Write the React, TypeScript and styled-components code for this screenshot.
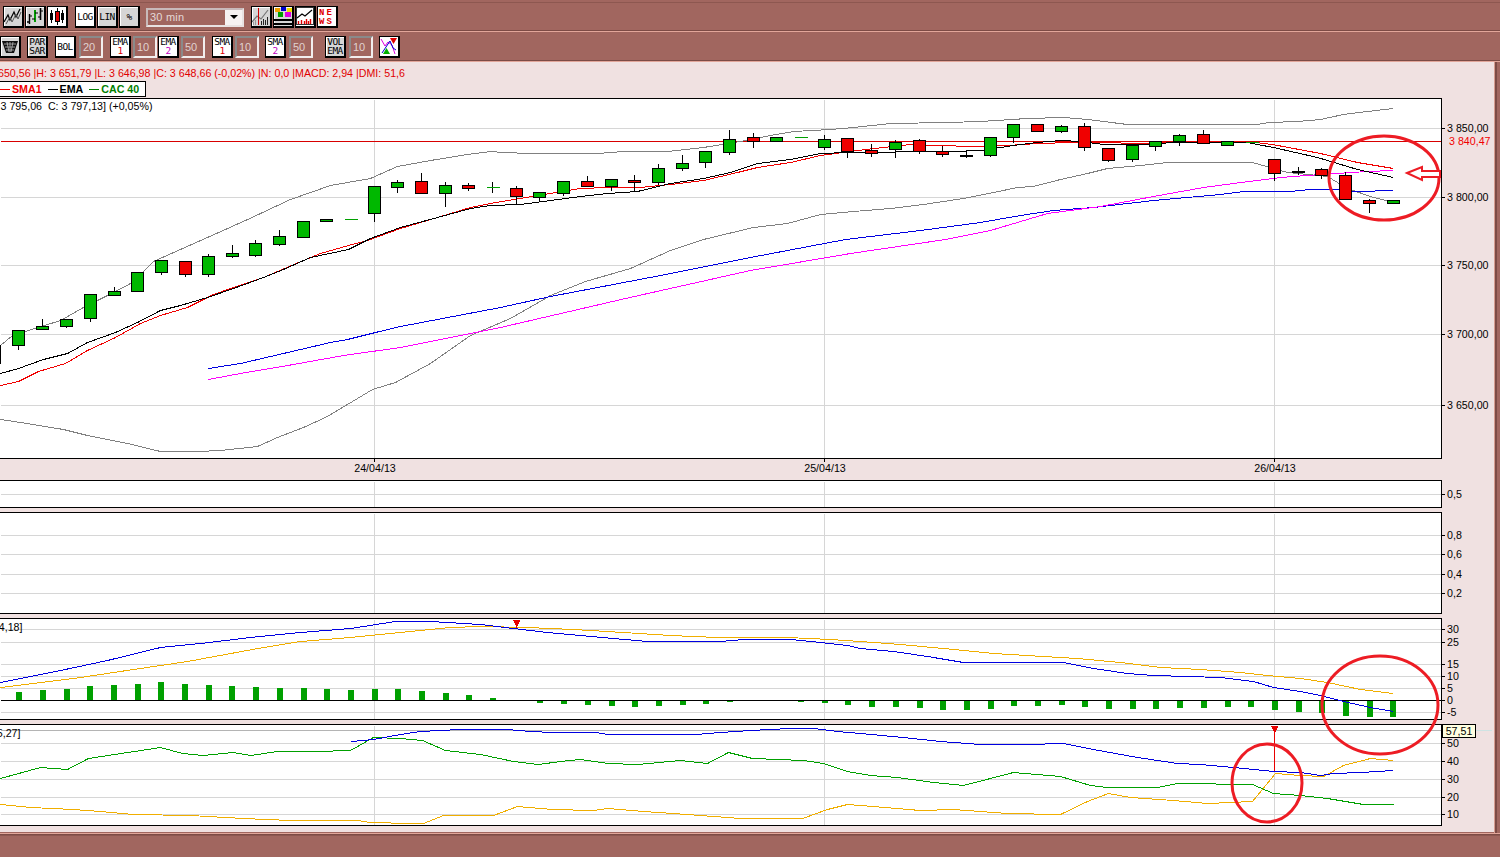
import type { ReactNode } from "react";
import styled, { createGlobalStyle } from "styled-components";

const GlobalStyle = createGlobalStyle`
	html, body {
		margin: 0;
		padding: 0;
		background: #a1665f;
		overflow: hidden;
	}
`;

// === layout ===
const Shell = styled.div`
	position: relative;
	width: 1500px;
	height: 857px;
	display: flex;
	flex-direction: column;
	background: #a1665f;
	font-family: "Liberation Sans", Arial, sans-serif;
	overflow: hidden;
`;

const TopToolbar = styled.div`
	box-sizing: border-box;
	height: 31px;
	padding: 4px 0 0 3px;
	display: flex;
	align-items: center;
	border-bottom: 1px solid #7d4b45;
	background: linear-gradient(#a1665f 2px, #8d5750 2px, #8d5750 3px, #a1665f 3px);
`;

const IndicatorToolbar = styled.div`
	box-sizing: border-box;
	height: 30px;
	padding-top: 1px;
	display: flex;
	align-items: center;
	border-top: 1px solid #e2a69a;
	border-bottom: 1px solid #7d4b45;
`;

const Middle = styled.div`
	display: flex;
	height: 771px;
	border-top: 1px solid #e2a69a;
`;

const Workspace = styled.div`
	box-sizing: border-box;
	width: 1494px;
	height: 770px;
	padding-top: 4px;
	background: #f0e1e1;
	overflow: hidden;
`;

const RightEdge = styled.div`
	width: 6px;
	border-left: 1px solid #d59c90;
	box-shadow: inset 2px 0 0 #7d4b45;
	box-sizing: border-box;
`;

const BottomBar = styled.div`
	flex: 1;
	border-top: 1px solid #e2a69a;
	box-shadow: inset 0 1px 0 #7d4b45, inset 0 2px 0 #8d5750;
`;

const InfoLine = styled.div`
	height: 15px;
	line-height: 15px;
	margin-left: -2px;
	font-size: 10.67px;
	color: #e00000;
	white-space: pre;
`;

const Legend = styled.div`
	box-sizing: border-box;
	display: flex;
	align-items: center;
	width: 146px;
	height: 16px;
	background: #fff;
	border: 1px solid #000;
	border-left: none;
	font-size: 10.67px;
	font-weight: bold;
	white-space: nowrap;
`;

const LegendItem = styled.span<{ $color: string; $first?: boolean }>`
	display: flex;
	flex: none;
	align-items: center;
	gap: 2px;
	margin-left: ${(p) => (p.$first ? 0 : 6)}px;
	color: ${(p) => p.$color};
	&::before {
		content: "";
		width: 10px;
		height: 1px;
		background: ${(p) => p.$color};
	}
`;

const PanelRow = styled.div<{ $mt: number }>`
	display: flex;
	margin-top: ${(p) => p.$mt}px;
`;

const PlotBox = styled.div<{ $h: number }>`
	box-sizing: border-box;
	width: 1442px;
	height: ${(p) => p.$h}px;
	background: #fff;
	border: 1px solid #000;
	border-left: none;
`;

const DrawSvg = styled.svg`
	display: block;
	font-family: "Liberation Sans", Arial, sans-serif;
	font-size: 10.67px;
	overflow: hidden;
`;

const Overlay = styled.svg`
	position: absolute;
	left: 0;
	top: 0;
	pointer-events: none;
`;

const ValueTip = styled.div`
	position: absolute;
	left: 1442px;
	top: 724px;
	box-sizing: border-box;
	width: 34px;
	height: 14px;
	line-height: 12px;
	text-align: center;
	background: #ffffe1;
	border: 1px solid #000;
	font-size: 10.67px;
`;

const TipLine = styled.div`
	position: absolute;
	left: 1476px;
	top: 730px;
	width: 16px;
	height: 1px;
	background: #cfe3e3;
`;

// === toolbar parts ===
const ToolButton = styled.button<{ $active?: boolean; $ml?: number }>`
	box-sizing: border-box;
	flex: none;
	width: 21px;
	height: 22px;
	margin: 0 0 0 ${(p) => p.$ml ?? 0}px;
	padding: 0;
	display: flex;
	flex-direction: column;
	align-items: center;
	justify-content: center;
	background: ${(p) => (p.$active ? "#fff" : "#d6d6d6")};
	border: 1px solid #000;
	border-right-width: 2px;
	border-bottom-width: 2px;
	box-shadow: inset 1px 1px 0 #fff;
	color: #000;
	font-family: "DejaVu Sans Mono", "Liberation Mono", monospace;
	font-size: 9.5px;
	line-height: 9px;
	letter-spacing: -0.5px;
`;

const SubDigit = styled.span<{ $color: string }>`
	color: ${(p) => p.$color};
`;

const NumberBox = styled.div<{ $ml?: number }>`
	box-sizing: border-box;
	flex: none;
	width: 24px;
	height: 22px;
	margin-left: ${(p) => p.$ml ?? 3}px;
	padding-left: 2px;
	line-height: 18px;
	background: #a1665f;
	border: 2px solid #8a8a8a;
	border-right-color: #f2eeee;
	border-bottom-color: #f2eeee;
	color: #e0d2d0;
	font-size: 11px;
`;

const IntervalSelect = styled.div`
	box-sizing: border-box;
	flex: none;
	display: flex;
	width: 98px;
	height: 19px;
	margin-left: 6px;
	border: 2px solid #e8e2e2;
	border-top-color: #c8baba;
	border-left-color: #c8baba;
	color: #e4d8d8;
	font-size: 11px;
	line-height: 15px;
`;

const IntervalText = styled.div`
	flex: 1;
	padding-left: 2px;
	letter-spacing: 0.2px;
`;

const IntervalArrow = styled.div`
	width: 17px;
	display: flex;
	align-items: center;
	justify-content: center;
	background: #f6f2f2;
	&::after {
		content: "";
		border-left: 4px solid transparent;
		border-right: 4px solid transparent;
		border-top: 4px solid #000;
	}
`;

const IconSvg = styled.svg`
	display: block;
`;

const Icon = ({ children }: { children: ReactNode }) => (
	<IconSvg width="18" height="19" viewBox="0 0 18 19">
		{children}
	</IconSvg>
);

// === chart helpers ===
type Pt = [number, number];

const pts = (a: Pt[]) => a.map((p) => p.join(",")).join(" ");

const Trace = ({ data, color }: { data: Pt[]; color: string }) => (
	<polyline points={pts(data)} fill="none" stroke={color} strokeWidth={1} shapeRendering="crispEdges" />
);

const VERTICALS = [374, 824, 1274];

const Grid = ({ ys, top, bottom, color = "#d6d6d6" }: { ys: number[]; top: number; bottom: number; color?: string }) => (
	<g stroke={color} strokeWidth={1} shapeRendering="crispEdges">
		{ys.map((y) => (
			<line key={y} x1={0} x2={1441} y1={y} y2={y} />
		))}
		{VERTICALS.map((x) => (
			<line key={x} x1={x} x2={x} y1={top} y2={bottom} />
		))}
	</g>
);

const Plot = ({ top, bottom, mt, ticks, children }: { top: number; bottom: number; mt: number; ticks: [number, string, string?][]; children: ReactNode }) => {
	const h = bottom - top + 1;
	return (
		<PanelRow $mt={mt}>
			<PlotBox $h={h}>
				<DrawSvg width={1441} height={h - 2} viewBox={`0 ${top + 1} 1441 ${h - 2}`}>
					<g transform="translate(0.5,0.5)">{children}</g>
				</DrawSvg>
			</PlotBox>
			<DrawSvg width={52} height={h} viewBox={`1442 ${top} 52 ${h}`}>
				{ticks.map(([y, label, color]) => (
					<g key={label}>
						{!color && <line x1={1442} x2={1445} y1={y + 0.5} y2={y + 0.5} stroke="#000" shapeRendering="crispEdges" />}
						<text x={color ? 1449 : 1447} y={y + 4} fill={color ?? "#000"}>
							{label}
						</text>
					</g>
				))}
			</DrawSvg>
		</PanelRow>
	);
};

// x, body top, body bottom, high, low, colour
type Candle = [number, number, number, number, number, "g" | "r" | "k"];

const CANDLES: Candle[] = [
	[-6, 345, 363, 345, 363, "g"],
	[18, 330, 345, 330, 349, "g"],
	[42, 326, 329, 318, 329, "g"],
	[66, 319, 326, 319, 327, "g"],
	[90, 294, 318, 293, 321, "g"],
	[114, 291, 295, 286, 295, "g"],
	[137, 272, 291, 271, 291, "g"],
	[161, 260, 272, 259, 274, "g"],
	[185, 261, 274, 261, 276, "r"],
	[208, 256, 274, 253, 276, "g"],
	[232, 253, 256, 244, 257, "g"],
	[255, 243, 255, 239, 256, "g"],
	[279, 236, 244, 229, 245, "g"],
	[303, 221, 237, 220, 237, "g"],
	[326, 219, 221, 219, 221, "g"],
	[350, 219, 219, 219, 219, "g"],
	[374, 186, 213, 185, 221, "g"],
	[397, 182, 187, 179, 192, "g"],
	[421, 181, 193, 172, 193, "r"],
	[445, 185, 193, 181, 206, "g"],
	[468, 185, 188, 182, 190, "r"],
	[492, 187, 187, 181, 192, "g"],
	[516, 188, 196, 185, 203, "r"],
	[539, 192, 197, 191, 201, "g"],
	[563, 181, 193, 180, 195, "g"],
	[587, 181, 186, 175, 186, "r"],
	[611, 179, 186, 179, 190, "g"],
	[634, 180, 182, 174, 191, "r"],
	[658, 168, 182, 163, 184, "g"],
	[682, 163, 168, 154, 170, "g"],
	[705, 151, 162, 151, 167, "g"],
	[729, 139, 152, 129, 154, "g"],
	[753, 137, 141, 132, 147, "r"],
	[776, 137, 141, 137, 141, "g"],
	[800, 137, 137, 137, 137, "g"],
	[824, 139, 147, 134, 149, "g"],
	[847, 138, 151, 138, 157, "r"],
	[871, 150, 153, 143, 156, "r"],
	[895, 142, 149, 139, 157, "g"],
	[919, 140, 151, 138, 153, "r"],
	[942, 151, 154, 145, 156, "r"],
	[966, 155, 156, 149, 157, "k"],
	[990, 137, 155, 136, 156, "g"],
	[1013, 124, 137, 123, 142, "g"],
	[1037, 124, 131, 124, 131, "r"],
	[1061, 126, 131, 124, 132, "g"],
	[1084, 126, 147, 122, 150, "r"],
	[1108, 148, 160, 148, 161, "r"],
	[1132, 145, 159, 143, 161, "g"],
	[1155, 141, 146, 140, 150, "g"],
	[1179, 135, 141, 133, 145, "g"],
	[1203, 134, 143, 129, 143, "r"],
	[1227, 141, 145, 141, 145, "g"],
	[1251, 142, 142, 142, 142, "g"],
	[1274, 159, 173, 159, 180, "r"],
	[1298, 171, 172, 166, 174, "k"],
	[1321, 169, 175, 167, 178, "r"],
	[1345, 175, 199, 171, 199, "r"],
	[1369, 200, 203, 198, 212, "r"],
	[1393, 200, 203, 200, 203, "g"],
];

const FILL = { g: "#00b800", r: "#f00000", k: "#000" };

const CandleMark = ({ c }: { c: Candle }) => {
	const [x, t, b, hi, lo, col] = c;
	if (t === b) {
		return (
			<g shapeRendering="crispEdges">
				{hi !== lo && <line x1={x} x2={x} y1={hi} y2={lo} stroke="#000" />}
				<line x1={x - 6} x2={x + 7} y1={t} y2={t} stroke="#00a000" />
			</g>
		);
	}
	return (
		<g shapeRendering="crispEdges">
			<line x1={x} x2={x} y1={hi} y2={lo} stroke="#000" />
			<rect x={x - 6} y={t} width={12} height={b - t} fill={FILL[col]} stroke="#000" />
		</g>
	);
};

const BOLL_UP: Pt[] = [[0, 345], [12, 335], [60, 320], [83, 307], [107, 295], [132, 282], [153, 261], [245, 220], [290, 199], [330, 185], [370, 178], [397, 166], [430, 160], [467, 154], [490, 151], [503, 152], [530, 153], [550, 153], [597, 153], [623, 151], [647, 151], [667, 151], [703, 147], [740, 141], [770, 135], [793, 131], [830, 129], [853, 127], [890, 123], [947, 122], [980, 121], [1027, 118], [1063, 117], [1087, 119], [1127, 124], [1173, 124], [1257, 124], [1268, 122], [1297, 121], [1320, 119], [1343, 114], [1367, 111], [1393, 108]];
const BOLL_LOW: Pt[] = [[0, 419], [20, 422], [63, 429], [87, 435], [127, 443], [160, 451], [197, 451], [220, 450], [257, 446], [277, 437], [303, 427], [325, 417], [347, 404], [372, 389], [395, 382], [430, 363], [470, 335], [510, 318], [550, 295], [585, 281], [630, 268], [670, 250], [703, 239], [753, 227], [787, 223], [820, 214], [853, 211], [890, 208], [923, 204], [963, 198], [993, 192], [1017, 187], [1033, 186], [1060, 179], [1087, 173], [1107, 168], [1140, 165], [1167, 162], [1252, 162], [1287, 172], [1327, 176], [1347, 188], [1370, 196], [1393, 202]];
const EMA1: Pt[] = [[0, 373], [18, 368], [43, 359], [67, 353], [87, 342], [115, 332], [137, 322], [160, 310], [180, 305], [207, 297], [233, 288], [263, 277], [283, 269], [310, 257], [348, 249], [370, 238], [400, 227], [437, 217], [470, 208], [490, 205], [520, 204], [550, 200], [580, 196], [607, 193], [637, 191], [670, 183], [703, 178], [730, 172], [757, 163], [790, 159], [820, 153], [847, 152], [870, 152], [920, 151], [953, 151], [980, 150], [1013, 145], [1037, 142], [1060, 140], [1080, 141], [1103, 144], [1143, 144], [1173, 142], [1247, 142], [1257, 144], [1273, 147], [1317, 157], [1357, 169], [1393, 177]];
const SMA1: Pt[] = [[0, 385], [18, 381], [38, 371], [65, 363], [87, 350], [115, 337], [140, 323], [160, 315], [187, 307], [213, 294], [233, 287], [263, 277], [303, 260], [320, 253], [348, 245], [367, 240], [400, 228], [437, 217], [470, 207], [490, 203], [520, 198], [550, 193], [580, 188], [607, 187], [640, 187], [670, 184], [703, 180], [737, 172], [757, 167], [790, 162], [820, 155], [857, 150], [883, 147], [910, 144], [930, 145], [980, 146], [1007, 145], [1037, 143], [1073, 142], [1097, 142], [1143, 143], [1187, 141], [1233, 141], [1255, 142], [1272, 144], [1320, 153], [1357, 162], [1393, 168]];
const EMA2: Pt[] = [[208, 368], [240, 363], [330, 342], [347, 339], [375, 332], [400, 326], [500, 307], [550, 296], [660, 275], [750, 257], [845, 239], [920, 230], [980, 222], [1020, 215], [1053, 210], [1093, 207], [1153, 200], [1220, 194], [1243, 191], [1290, 191], [1310, 189], [1333, 189], [1357, 191], [1393, 190]];
const SMA2: Pt[] = [[208, 379], [240, 373], [293, 364], [343, 355], [400, 347], [500, 327], [625, 298], [750, 270], [850, 253], [945, 239], [990, 230], [1047, 213], [1100, 206], [1153, 196], [1203, 187], [1233, 183], [1280, 177], [1320, 174], [1367, 171], [1393, 170]];

const MACD_LINE: Pt[] = [[0, 682], [60, 670], [107, 660], [160, 647], [200, 643], [250, 637], [300, 632], [350, 628], [395, 621], [430, 621], [480, 624], [513, 628], [547, 632], [580, 635], [613, 638], [647, 641], [720, 641], [743, 639], [790, 639], [820, 642], [847, 645], [860, 648], [893, 651], [927, 656], [963, 662], [1003, 662], [1063, 662], [1093, 668], [1127, 673], [1153, 675], [1187, 676], [1220, 677], [1253, 681], [1273, 687], [1300, 691], [1320, 695], [1343, 701], [1370, 707], [1393, 711]];
const MACD_SIG: Pt[] = [[0, 687], [33, 683], [80, 677], [133, 669], [187, 661], [252, 649], [300, 641], [350, 637], [400, 632], [450, 627], [480, 626], [527, 627], [573, 629], [623, 632], [670, 635], [717, 637], [787, 637], [830, 639], [860, 641], [900, 644], [943, 648], [993, 653], [1043, 656], [1077, 658], [1120, 662], [1160, 667], [1200, 669], [1240, 672], [1267, 675], [1300, 678], [1327, 682], [1360, 689], [1393, 693]];
const HIST: [number, number][] = [[19, 692], [43, 690], [67, 689], [90, 686], [114, 685], [138, 684], [161, 682], [185, 684], [209, 685], [232, 686], [256, 687], [280, 688], [304, 688], [327, 689], [351, 690], [375, 689], [398, 689], [422, 691], [446, 693], [469, 695], [493, 698], [540, 703], [564, 704], [588, 705], [612, 706], [635, 707], [659, 706], [683, 705], [706, 704], [730, 702], [801, 702], [825, 703], [848, 705], [872, 707], [896, 707], [920, 708], [943, 710], [967, 710], [991, 709], [1014, 706], [1038, 706], [1062, 705], [1085, 707], [1109, 709], [1133, 709], [1156, 709], [1180, 708], [1204, 708], [1228, 707], [1251, 707], [1275, 710], [1299, 712], [1322, 713], [1346, 716], [1370, 717], [1393, 717]];

const DMI_BLUE: Pt[] = [[351, 741], [373, 739], [400, 734], [420, 731], [460, 729], [507, 729], [530, 731], [553, 732], [595, 732], [608, 734], [695, 734], [720, 732], [750, 730], [790, 728], [813, 728], [837, 731], [860, 733], [903, 737], [940, 741], [980, 744], [1027, 744], [1063, 743], [1093, 749], [1137, 757], [1177, 763], [1200, 764], [1233, 767], [1273, 771], [1300, 772], [1320, 775], [1333, 773], [1360, 772], [1393, 770]];
const DMI_GREEN: Pt[] = [[0, 778], [40, 767], [67, 769], [88, 758], [160, 747], [182, 753], [203, 755], [233, 752], [250, 755], [277, 751], [315, 751], [350, 750], [373, 737], [400, 738], [422, 740], [445, 750], [480, 754], [513, 761], [538, 764], [560, 761], [580, 759], [608, 763], [637, 764], [680, 760], [707, 763], [728, 752], [752, 758], [803, 760], [823, 763], [847, 771], [870, 775], [897, 777], [933, 782], [963, 785], [1013, 772], [1060, 776], [1090, 785], [1107, 787], [1157, 787], [1177, 783], [1252, 784], [1273, 793], [1300, 795], [1327, 798], [1363, 804], [1393, 804]];
const DMI_ORANGE: Pt[] = [[0, 804], [30, 807], [73, 809], [100, 811], [133, 814], [190, 815], [243, 818], [290, 820], [357, 820], [370, 822], [410, 823], [423, 823], [443, 815], [493, 815], [517, 806], [552, 809], [593, 810], [607, 808], [643, 811], [687, 814], [740, 818], [802, 818], [827, 809], [847, 804], [860, 805], [920, 810], [953, 809], [1007, 813], [1060, 814], [1087, 801], [1108, 793], [1130, 797], [1173, 800], [1207, 803], [1252, 801], [1275, 773], [1300, 775], [1323, 776], [1343, 765], [1370, 758], [1393, 760]];

const ORANGE = "#f0ae00";
const BLUE = "#0000e0";

const DateAxis = () => (
	<DrawSvg width={1442} height={21} viewBox="0 459 1442 21">
		{VERTICALS.map((x, i) => (
			<g key={x}>
				<line x1={x + 0.5} x2={x + 0.5} y1={459} y2={462} stroke="#000" shapeRendering="crispEdges" />
				<text x={x + 1} y={472} textAnchor="middle" fill="#000">
					{["24/04/13", "25/04/13", "26/04/13"][i]}
				</text>
			</g>
		))}
	</DrawSvg>
);

const Marker = ({ x, y }: { x: number; y: number }) => (
	<polygon points={`${x - 4},${y} ${x + 4},${y} ${x + 2},${y + 4} ${x + 1},${y + 6} ${x},${y + 9} ${x - 1},${y + 6} ${x - 2},${y + 4}`} fill="#e80000" shapeRendering="crispEdges" />
);

export default function App() {
	return (
		<Shell>
			<GlobalStyle />
			<TopToolbar>
				<ToolButton title="Line">
					<Icon>
						<polyline points="0,15 4,8 6,13 10,5 12,10 16,2" fill="none" stroke="#000" strokeWidth={1.2} />
						<polyline points="2,17 6,10 8,15 12,7 14,12 17,5" fill="none" stroke="#555" strokeWidth={1} />
					</Icon>
				</ToolButton>
				<ToolButton $ml={1} title="Bars">
					<Icon>
						<path d="M3.5 7V17M1 15H3.5" stroke="#000" strokeWidth={1.4} fill="none" />
						<path d="M3.5 9H6" stroke="#000" fill="none" />
						<path d="M9 3V15" stroke="#009a00" strokeWidth={2} fill="none" />
						<path d="M6 12H9M9 6H12" stroke="#000" fill="none" />
						<path d="M14.5 1V13" stroke="#000" strokeWidth={1.6} fill="none" />
						<path d="M12 10H14.5M14.5 4H17" stroke="#000" fill="none" />
					</Icon>
				</ToolButton>
				<ToolButton $ml={1} $active title="Candles">
					<Icon>
						<path d="M3.5 3V16M9.5 1V18M14.5 3V16" stroke="#000" />
						<rect x="2" y="6" width="3" height="7" fill="#000" />
						<rect x="7.5" y="4.5" width="4" height="10" fill="#e00000" stroke="#000" />
						<rect x="13" y="6" width="3" height="7" fill="#000" />
					</Icon>
				</ToolButton>
				<ToolButton $ml={7} $active>LOG</ToolButton>
				<ToolButton $ml={1}>LIN</ToolButton>
				<ToolButton $ml={1}>%</ToolButton>
				<IntervalSelect>
					<IntervalText>30 min</IntervalText>
					<IntervalArrow />
				</IntervalSelect>
				<ToolButton $ml={7} title="Cursor">
					<Icon>
						<polyline points="0,15 5,9 9,12 16,3" fill="none" stroke="#777" strokeWidth={1.2} />
						<path d="M6.5 1V18" stroke="#d00000" />
						<path d="M9.5 18V14M11.5 18V12M13.5 18V13M15.5 18V10" stroke="#222" />
						<path d="M1.5 18V15M3.5 18V13" stroke="#999" />
					</Icon>
				</ToolButton>
				<ToolButton $ml={1} title="Colours">
					<Icon>
						<rect x="1" y="1" width="5" height="4" fill="#f0a000" />
						<rect x="7" y="0" width="5" height="4" fill="#0000d0" />
						<rect x="13" y="1" width="5" height="4" fill="#f0e000" />
						<rect x="4" y="5" width="5" height="5" fill="#00a000" />
						<rect x="11" y="5" width="6" height="5" fill="#e000e0" />
						<rect x="0" y="12" width="18" height="2" fill="#000" />
						<rect x="0" y="16" width="18" height="2" fill="#000" />
					</Icon>
				</ToolButton>
				<ToolButton $ml={1} $active title="Chart">
					<Icon>
						<rect x="0.5" y="0.5" width="17" height="17" fill="#fff" stroke="#333" />
						<polyline points="1,11 6,7 9,9 16,3" fill="none" stroke="#000" strokeWidth={1.2} />
						<path d="M2.5 17V14M5.5 17V13M8.5 17V14M10.5 17V12M12.5 17V14M14.5 17V12" stroke="#e00000" strokeWidth={1.4} />
					</Icon>
				</ToolButton>
				<ToolButton $ml={1} $active title="News">
					<Icon>
						<text x="1" y="8" fontSize="9" fontWeight="bold" fill="#e00000" fontFamily="Liberation Mono" letterSpacing="2">NE</text>
						<text x="1" y="17" fontSize="9" fontWeight="bold" fill="#e00000" fontFamily="Liberation Mono" letterSpacing="2">WS</text>
					</Icon>
				</ToolButton>
			</TopToolbar>
			<IndicatorToolbar>
				<ToolButton $ml={0} title="Clear">
					<Icon>
						<path d="M1 4H17L13 16H5Z" fill="#111" />
						<path d="M3 7H15M4 10H14M5 13H13M6 5L8 15M9 5V15M12 5L10 15" stroke="#aaa" strokeWidth={0.9} />
					</Icon>
				</ToolButton>
				<ToolButton $ml={6}>PAR<br />SAR</ToolButton>
				<ToolButton $ml={7} $active>BOL</ToolButton>
				<NumberBox>20</NumberBox>
				<ToolButton $ml={7} $active>EMA<SubDigit $color="#e00000">1</SubDigit></ToolButton>
				<NumberBox $ml={2}>10</NumberBox>
				<ToolButton $ml={1} $active>EMA<SubDigit $color="#c000c0">2</SubDigit></ToolButton>
				<NumberBox $ml={2}>50</NumberBox>
				<ToolButton $ml={7} $active>SMA<SubDigit $color="#e00000">1</SubDigit></ToolButton>
				<NumberBox $ml={2}>10</NumberBox>
				<ToolButton $ml={6} $active>SMA<SubDigit $color="#c000c0">2</SubDigit></ToolButton>
				<NumberBox>50</NumberBox>
				<ToolButton $ml={12}>VOL<br />EMA</ToolButton>
				<NumberBox>10</NumberBox>
				<ToolButton $ml={6} $active title="Signals">
					<Icon>
						<polyline points="1,2 5,9 8,5 12,8 15,17" fill="none" stroke="#e000e0" />
						<polyline points="2,16 6,10 10,4 13,11 16,13" fill="none" stroke="#0000d0" />
						<polygon points="10,1 17,1 13.5,7" fill="#e00000" />
						<polygon points="3,17 10,17 6.5,11" fill="#00b000" />
					</Icon>
				</ToolButton>
			</IndicatorToolbar>
			<Middle>
				<Workspace>
					<InfoLine>650,56 |H: 3 651,79 |L: 3 646,98 |C: 3 648,66 (-0,02%) |N: 0,0 |MACD: 2,94 |DMI: 51,6</InfoLine>
					<Legend>
						<LegendItem $color="#f00000" $first>SMA1</LegendItem>
						<LegendItem $color="#000">EMA</LegendItem>
						<LegendItem $color="#008000">CAC 40</LegendItem>
					</Legend>
					<Plot
						top={98}
						bottom={458}
						mt={1}
						ticks={[
							[128, "3 850,00"],
							[141, "3 840,47", "#f00000"],
							[197, "3 800,00"],
							[265, "3 750,00"],
							[334, "3 700,00"],
							[405, "3 650,00"],
						]}
					>
						<Grid ys={[128, 197, 265, 334, 405]} top={99} bottom={457} />
						<line x1={0} x2={1441} y1={141} y2={141} stroke="#d80000" shapeRendering="crispEdges" />
						<Trace data={BOLL_UP} color="#808080" />
						<Trace data={BOLL_LOW} color="#808080" />
						<Trace data={EMA2} color={BLUE} />
						<Trace data={SMA2} color="#ff00ff" />
						<Trace data={SMA1} color="#f00000" />
						<Trace data={EMA1} color="#000" />
						{CANDLES.map((c) => (
							<CandleMark key={c[0]} c={c} />
						))}
						<text x={0} y={109} fill="#000" xmlSpace="preserve">{"3 795,06  C: 3 797,13] (+0,05%)"}</text>
					</Plot>
					<DateAxis />
					<Plot top={480} bottom={507} mt={0} ticks={[[494, "0,5"]]}>
						<Grid ys={[494]} top={481} bottom={506} />
					</Plot>
					<Plot
						top={512}
						bottom={613}
						mt={4}
						ticks={[
							[535, "0,8"],
							[554, "0,6"],
							[574, "0,4"],
							[593, "0,2"],
						]}
					>
						<Grid ys={[535, 554, 574, 593]} top={513} bottom={612} />
					</Plot>
					<Plot
						top={618}
						bottom={719}
						mt={4}
						ticks={[
							[629, "30"],
							[642, "25"],
							[664, "15"],
							[676, "10"],
							[688, "5"],
							[700, "0"],
							[712, "-5"],
						]}
					>
						<Grid ys={[629, 642, 664, 676, 688, 712]} top={619} bottom={718} />
						{HIST.map(([x, y]) => (
							<rect key={x} x={x - 3.5} y={Math.min(y, 700) - 0.5} width={6} height={Math.abs(y - 700)} fill="#00a000" shapeRendering="crispEdges" />
						))}
						<line x1={0} x2={1441} y1={700} y2={700} stroke="#000" shapeRendering="crispEdges" />
						<Trace data={MACD_SIG} color={ORANGE} />
						<Trace data={MACD_LINE} color={BLUE} />
						<Marker x={516} y={619} />
						<text x={22} y={630} fill="#000" textAnchor="end">4,18]</text>
					</Plot>
					<Plot
						top={724}
						bottom={825}
						mt={4}
						ticks={[
							[743, "50"],
							[761, "40"],
							[779, "30"],
							[797, "20"],
							[814, "10"],
						]}
					>
						<Grid ys={[743, 761, 779, 797, 814]} top={725} bottom={824} />
						<line x1={0} x2={1441} y1={730} y2={730} stroke="#b4b4b4" shapeRendering="crispEdges" />
						<Trace data={DMI_ORANGE} color={ORANGE} />
						<Trace data={DMI_GREEN} color="#00a000" />
						<Trace data={DMI_BLUE} color={BLUE} />
						<line x1={1274} x2={1274} y1={726} y2={770} stroke="#e80000" shapeRendering="crispEdges" />
						<Marker x={1274} y={725} />
						<text x={20} y={736} fill="#000" textAnchor="end">5,27]</text>
					</Plot>
				</Workspace>
				<RightEdge />
			</Middle>
			<BottomBar />
			<ValueTip>57,51</ValueTip>
			<TipLine />
			{/* hand drawn notes over the panels */}
			<Overlay width={1500} height={857} viewBox="0 0 1500 857">
				<g fill="none" stroke="#ed1c24" strokeWidth={3}>
					<ellipse cx={1384} cy={178} rx={55} ry={42} />
					<ellipse cx={1380} cy={705} rx={58} ry={49} />
					<ellipse cx={1267} cy={783} rx={35} ry={39} />
				</g>
				<polygon points="1407,173 1422,167 1422,171 1440,171 1440,177 1422,177 1422,180" fill="#fff" stroke="#ed1c24" strokeWidth={2} />
			</Overlay>
		</Shell>
	);
}
